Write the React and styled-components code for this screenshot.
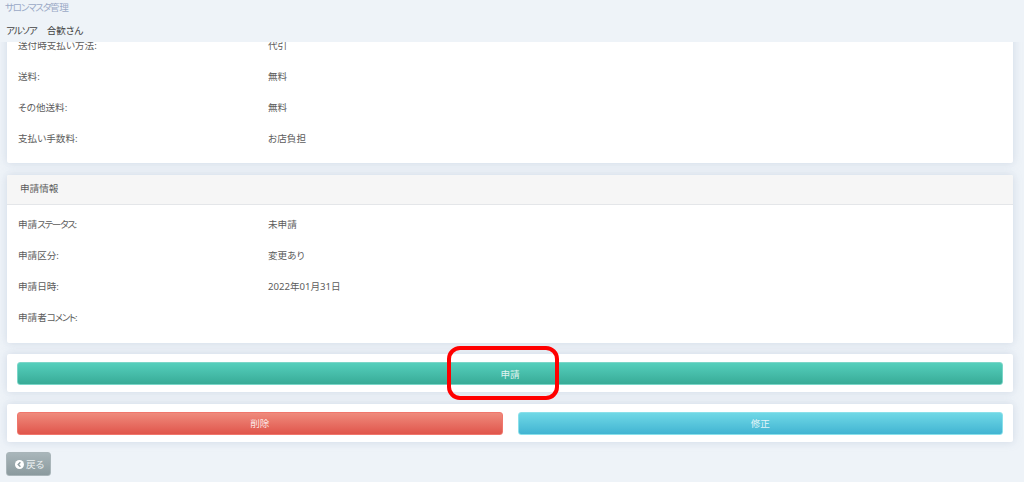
import React from 'react'
import styled, { createGlobalStyle } from 'styled-components'

const GlobalStyle = createGlobalStyle`
  html, body {
    margin: 0;
    padding: 0;
    background: #eef3f8;
  }
  body {
    font-family: "Noto Sans", "Noto Sans CJK JP", sans-serif;
    font-size: 9.6px;
    font-feature-settings: "palt";
    color: #5c5c5c;
  }
  * { box-sizing: border-box; }
`

const Page = styled.div`
  position: relative;
  width: 1024px;
  height: 482px;
  overflow: hidden;
`
const Header = styled.header`
  height: 42px;
  padding-left: 5px;
`
const BrandLink = styled.div`
  height: 17px;
  line-height: 16px;
  color: #9aa9c6;
`
const UserName = styled.div`
  display: flex;
  gap: 10px;
  margin-top: 6px;
  padding-left: 1px;
  line-height: 16px;
  color: #444;
`
// katakana runs sit tighter in the original font
const Kana = styled.span`
  letter-spacing: ${p => p.$tight || '-1.3px'};
`
const Main = styled.main`
  height: 440px;
  overflow: hidden;
  padding: 0 11px 0 7px;
`
const Stack = styled.div`
  display: flex;
  flex-direction: column;
  gap: 11.5px;
  margin-top: -17px;
`
const Card = styled.section`
  background: #fff;
  border-radius: 2px;
  box-shadow: 0 0 8px rgba(150, 165, 195, 0.35);
`
const CardHead = styled.div`
  height: 30px;
  padding-left: 13px;
  line-height: 28px;
  background: #f6f6f6;
  border-bottom: 1px solid #e4e6e9;
  border-radius: 2px 2px 0 0;
`
const CardBody = styled.div`
  padding: 4px 11px 10px;
`
const Row = styled.div`
  display: grid;
  grid-template-columns: 250px 1fr;
  height: 31px;
  align-items: center;
`
const ButtonCard = styled(Card)`
  display: flex;
  gap: 15px;
  padding: 8px 10px 7px;
`
const ActionButton = styled.button`
  flex: 1;
  height: 23px;
  padding: 0;
  border: 1px solid ${p => p.$edge};
  border-radius: 3px;
  background: linear-gradient(${p => p.$from}, ${p => p.$to});
  color: rgba(255, 255, 255, 0.85);
  font: inherit;
  font-feature-settings: inherit;
`
const BackButton = styled.button`
  display: inline-flex;
  align-items: center;
  gap: 2px;
  height: 24px;
  width: 45px;
  margin-top: 10.5px;
  margin-left: -1px;
  padding: 0 0 0 8px;
  border: 1px solid #a9b5b9;
  border-radius: 3px;
  background: linear-gradient(#a9b6ba, #8b9a9e);
  color: #eef2f3;
  font: inherit;
  font-feature-settings: inherit;
`
const Highlight = styled.div`
  position: absolute;
  left: 447px;
  top: 346px;
  width: 112px;
  height: 54px;
  border: 4px solid #f00;
  border-radius: 13px;
  pointer-events: none;
`

const shipping = [
  ['送付時支払い方法:', '代引'],
  ['送料:', '無料'],
  ['その他送料:', '無料'],
  ['支払い手数料:', 'お店負担'],
]
const application = [
  [<>申請<Kana>ステータス</Kana>:</>, '未申請'],
  ['申請区分:', '変更あり'],
  ['申請日時:', '2022年01月31日'],
  [<>申請者<Kana>コメント</Kana>:</>, ''],
]

function Rows({ items }) {
  return (
    <CardBody>
      {items.map(([label, value], i) => (
        <Row key={i}>
          <span>{label}</span>
          <span>{value}</span>
        </Row>
      ))}
    </CardBody>
  )
}

function BackIcon() {
  return (
    <svg width="9" height="9" viewBox="0 0 10 10" aria-hidden="true">
      <circle cx="5" cy="5" r="5" fill="#fff" />
      <path d="M6 2.6 3.6 5 6 7.4" fill="none" stroke="#8f9da1" strokeWidth="1.6" />
    </svg>
  )
}

export default function App() {
  return (
    <Page>
      <GlobalStyle />
      <Header>
        <BrandLink><Kana>サロンマスタ</Kana>管理</BrandLink>
        <UserName>
          <Kana $tight="-1px">アルソア</Kana>
          <span>合歓さん</span>
        </UserName>
      </Header>
      <Main>
        <Stack>
          <Card>
            <Rows items={shipping} />
          </Card>
          <Card>
            <CardHead>申請情報</CardHead>
            <Rows items={application} />
          </Card>
          <ButtonCard>
            <ActionButton $from="#55cfbc" $to="#38ab97" $edge="#7bd6c8">申請</ActionButton>
          </ButtonCard>
          <ButtonCard>
            <ActionButton $from="#ef8a7c" $to="#e0564c" $edge="#f0766c">削除</ActionButton>
            <ActionButton $from="#6fd8e6" $to="#42b4d2" $edge="#8ae0ea">修正</ActionButton>
          </ButtonCard>
        </Stack>
        <BackButton><BackIcon />戻る</BackButton>
      </Main>
      <Highlight />
    </Page>
  )
}
